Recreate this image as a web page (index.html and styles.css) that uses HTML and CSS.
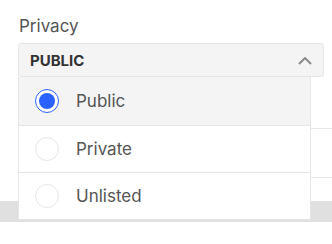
FILE: index.html
```html
<!DOCTYPE html>
<html>
<head>
<meta charset="utf-8">
<link rel="stylesheet" href="styles.css">
</head>
<body>
<div class="page">
  <div class="field">
    <div class="label">Privacy</div>
    <div class="select-wrap">
      <div class="select">
        <span class="value">PUBLIC</span>
        <svg class="chev" width="14" height="8" viewBox="0 0 14 8"><polyline points="1,7 7,1 13,7" fill="none" stroke="#8a8a8a" stroke-width="2"/></svg>
      </div>
      <ul class="menu">
        <li class="opt active"><span class="radio on"><span class="dot"></span></span><span class="txt">Public</span></li>
        <li class="opt"><span class="radio"></span><span class="txt">Private</span></li>
        <li class="opt"><span class="radio"></span><span class="txt">Unlisted</span></li>
      </ul>
    </div>
  </div>
  <div class="rows">
    <div class="row r1"></div>
    <div class="row r2"></div>
  </div>
  <div class="band"></div>
</div>
</body>
</html>
```
FILE: styles.css
```css
* { box-sizing: border-box; }
html, body { margin: 0; padding: 0; background: #fff; }
body { font-family: Inter, "Noto Sans", sans-serif; width: 332px; height: 244px; overflow: hidden; }
.page { padding-top: 14px; }
.field { padding: 0 8px 0 18px; }
.label { font-size: 17px; line-height: 24px; color: #555; padding-left: 1px; margin-bottom: 5px; }
.select-wrap { position: relative; }
.select {
  height: 34px; background: #f4f4f4; border: 1px solid #e6e6e6; border-radius: 3px;
  display: flex; align-items: center; justify-content: space-between; padding: 0 11px 0 11px;
}
.value { font-weight: 700; font-size: 15px; color: #333; }
.chev { margin-top: 1px; }
.menu {
  position: absolute; top: 34px; left: 0; width: 293px; margin: 0; padding: 0; list-style: none;
  background: #fff; border: 1px solid #e6e6e6; border-top: none; z-index: 2;
}
.opt { height: 47px; display: flex; align-items: center; padding-left: 16px; border-top: 1px solid #e6e6e6; }
.opt:first-child { border-top: none; height: 48px; }
.opt.active { background: #f4f4f4; }
.radio { width: 24px; height: 24px; border-radius: 50%; border: 1px solid #e6e6e6; background: #fff; display: flex; align-items: center; justify-content: center; }
.radio.on { border-color: #2962ff; }
.dot { width: 16px; height: 16px; border-radius: 50%; background: #2962ff; }
.txt { margin-left: 17px; font-size: 17px; color: #555; }
.rows { margin-left: 18px; }
.row { border-bottom: 1px solid #e8e8e8; }
.r1 { height: 52px; }
.r2 { height: 49px; }
.band { margin-top: 23px; height: 21px; background: #e0e0e0; }
```
